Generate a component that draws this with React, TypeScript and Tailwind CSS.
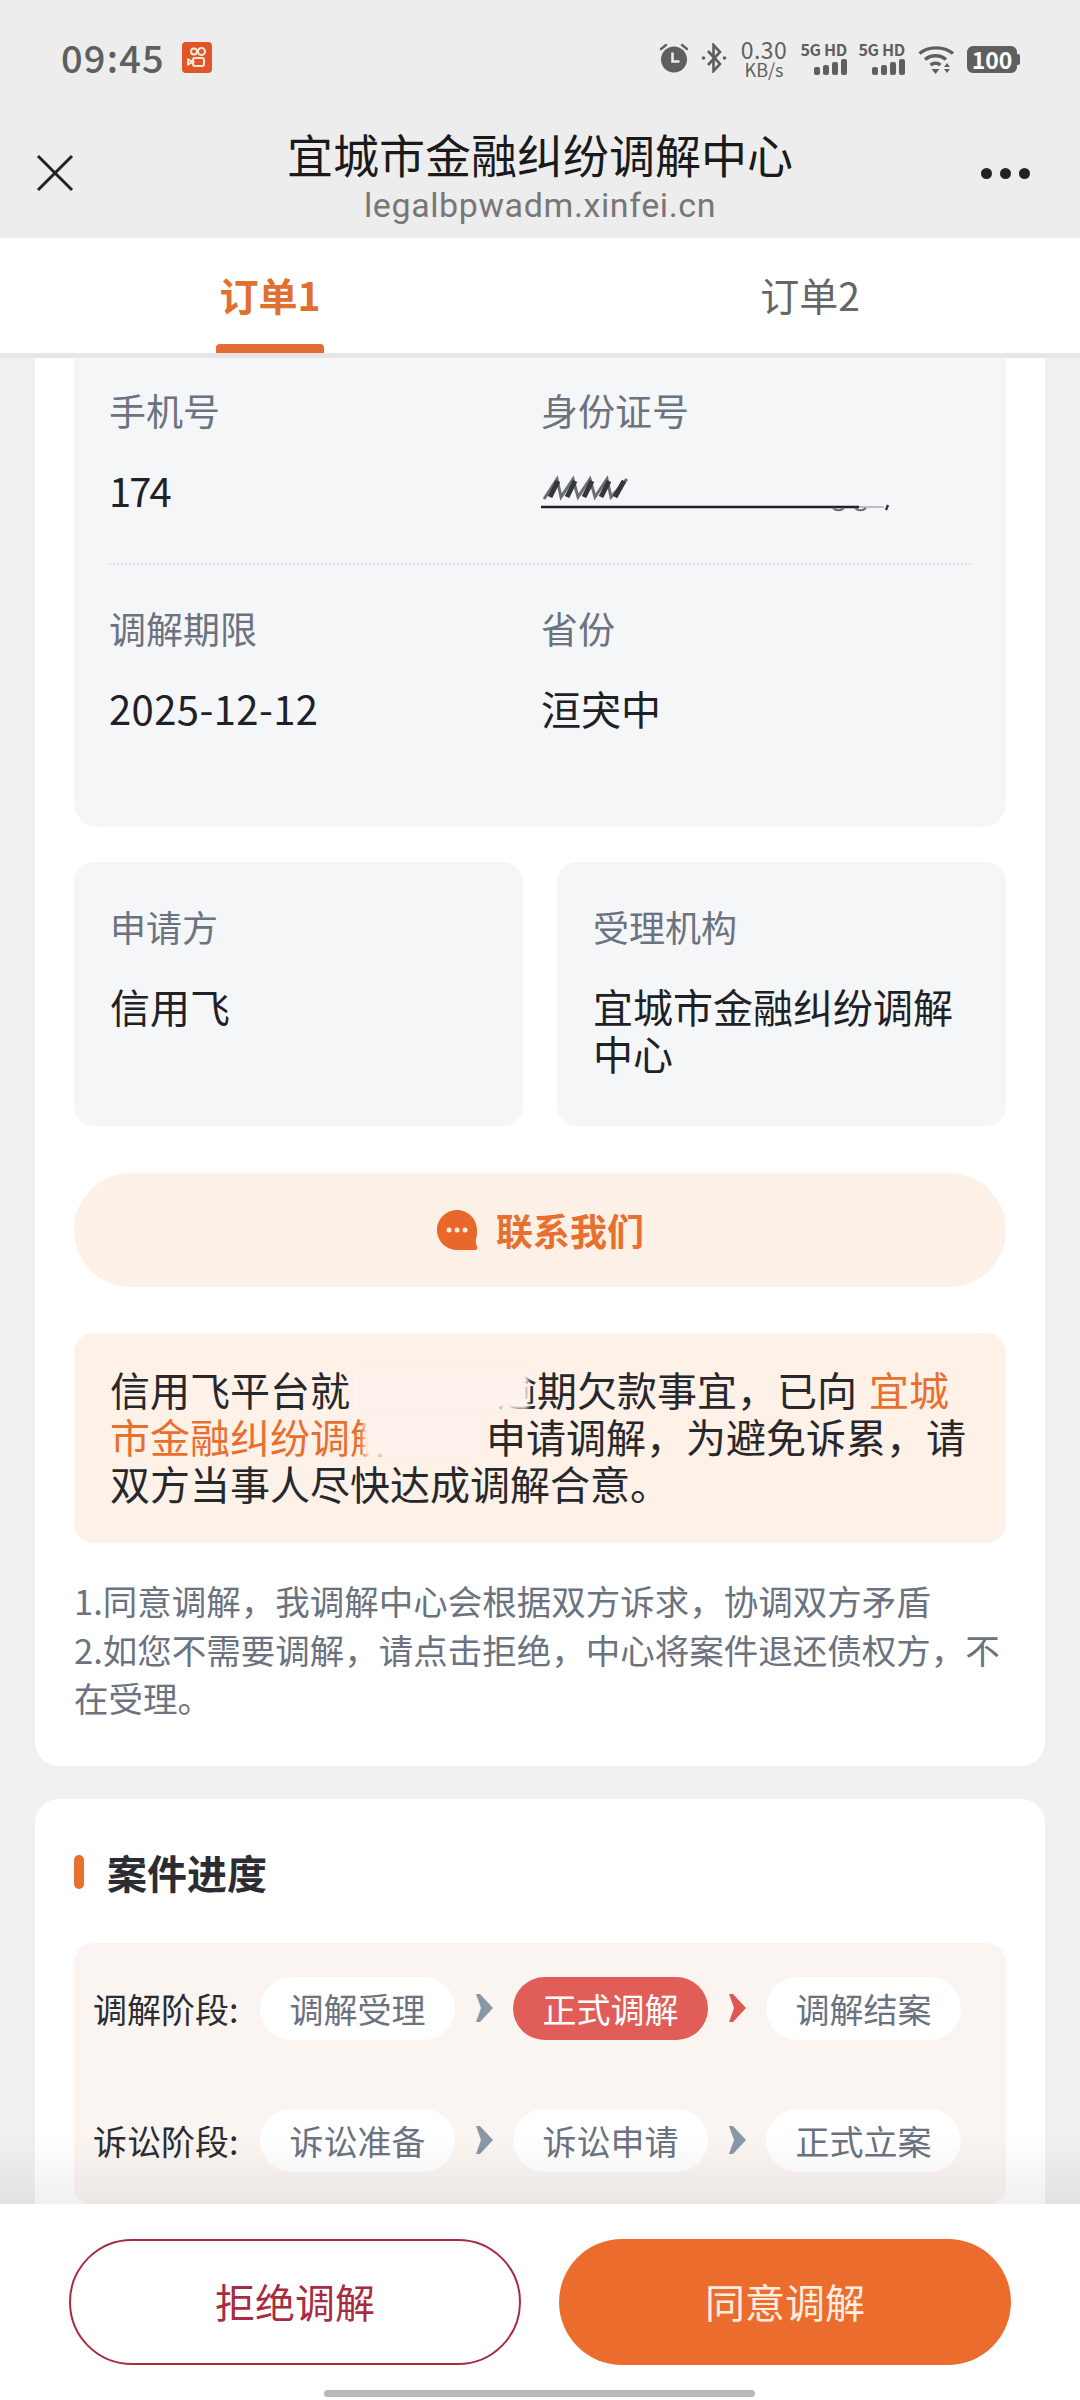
import React from 'react';

const Signal = () => (
  <div className="flex flex-col items-end w-[48px]">
    <span className="text-[16px] leading-[14px] font-bold text-[#5f5f5f] whitespace-nowrap tracking-[-0.3px]">5G HD</span>
    <div className="flex items-end gap-[3px] mt-[3px]">
      <div className="w-[6px] h-[8px] rounded-[2px] bg-[#5f5f5f]" />
      <div className="w-[6px] h-[10px] rounded-[2px] bg-[#5f5f5f]" />
      <div className="w-[6px] h-[13px] rounded-[2px] bg-[#5f5f5f]" />
      <div className="w-[6px] h-[16px] rounded-[2px] bg-[#5f5f5f]" />
    </div>
  </div>
);

const StatusBar = () => (
  <div className="h-[123px] pl-[61px] pr-[60px] flex items-start pt-[38px] justify-between">
    <div className="flex items-center">
      <span className="text-[38px] leading-[38px] font-medium text-[#5f5f5f] tracking-[1.2px]">09:45</span>
      <div className="ml-[17px] w-[30px] h-[31px] rounded-[4px] bg-[#e0562a] flex items-center justify-center">
        <svg width="26" height="26" viewBox="0 0 26 26" fill="none" stroke="#fde9d8" strokeWidth="2">
          <circle cx="10" cy="7.500" r="3" />
          <circle cx="17.500" cy="7.500" r="3.500" />
          <rect x="9" y="14" width="11" height="8" rx="2" />
          <path d="M4 15.500l5 2.500-5 2.500z" />
        </svg>
      </div>
    </div>
    <div className="flex items-start">
      <svg width="30" height="30" viewBox="0 0 30 30" className="mt-[5px]" fill="#5f5f5f">
        <circle cx="15" cy="16.500" r="13" />
        <path d="M2 6l5-4M28 6l-5-4" stroke="#5f5f5f" strokeWidth="2.400" strokeLinecap="round" />
        <path d="M13.500 9.500v9h7" stroke="#ededed" strokeWidth="2.600" fill="none" />
      </svg>
      <svg width="26" height="30" viewBox="0 0 26 30" className="ml-[12px] mt-[5px]" fill="none" stroke="#5f5f5f" strokeWidth="2.600">
        <path d="M7 8l12 13-6.500 7V2l6.500 7L7 22" />
        <circle cx="2.500" cy="15" r="1.800" fill="#5f5f5f" stroke="none" />
        <circle cx="23.500" cy="15" r="1.800" fill="#5f5f5f" stroke="none" />
      </svg>
      <div className="ml-[12px] w-[50px] flex flex-col items-center text-[#5f5f5f] whitespace-nowrap">
        <span className="text-[23px] leading-[22px] tracking-[0.5px]">0.30</span>
        <span className="text-[18px] leading-[18px]">KB/s</span>
      </div>
      <div className="ml-[10px] mt-[4px]">
        <Signal />
      </div>
      <div className="ml-[10px] mt-[4px]">
        <Signal />
      </div>
      <svg width="37" height="30" viewBox="0 0 37 30" className="ml-[13px] mt-[7px]" fill="none" stroke="#5f5f5f" strokeWidth="3.400">
        <path d="M1.500 8.500C10 1 26 1 35 8.500" />
        <path d="M7 14.500c6-5 15-5 21 0" />
        <path d="M12.500 20c3-2.500 7-2.500 10 0" />
        <path d="M13.500 24h8l-4 5z" fill="#5f5f5f" stroke="none" />
        <path d="M29 18l3 4h-6zM26 24h6l-3 4z" fill="#5f5f5f" stroke="none" />
      </svg>
      <div className="ml-[12px] mt-[8px] flex items-center">
        <div className="w-[50px] h-[27px] rounded-[6px] bg-[#5f5f5f] flex items-center justify-center text-white text-[23px] leading-[27px] font-bold">
          100
        </div>
        <div className="w-[3px] h-[11px] rounded-r-[2px] bg-[#5f5f5f]" />
      </div>
    </div>
  </div>
);

const Header = () => (
  <div className="h-[238px] bg-[#ededed] shrink-0">
    <StatusBar />
    <div className="flex items-start pl-[36px] pr-[50px]">
      <div className="w-[74px] pt-[31px]">
        <svg width="38" height="38" viewBox="0 0 38 38" fill="none" stroke="#222222" strokeWidth="3">
          <path d="M2 2l34 34M36 2L2 36" />
        </svg>
      </div>
      <div className="flex-1 flex flex-col items-center">
        <span className="text-[46px] leading-[60px] text-[#1a1a1a] whitespace-nowrap">宜城市金融纠纷调解中心</span>
        <span className="mt-[2px] text-[34px] leading-[40px] text-[#777777] tracking-[0.6px] font-['Roboto',sans-serif]">legalbpwadm.xinfei.cn</span>
      </div>
      <div className="w-[60px] pt-[45px] flex justify-end items-center gap-[8px]">
        <div className="w-[11px] h-[11px] rounded-full bg-[#222222]" />
        <div className="w-[11px] h-[11px] rounded-full bg-[#222222]" />
        <div className="w-[11px] h-[11px] rounded-full bg-[#222222]" />
      </div>
    </div>
  </div>
);

const Tabs = () => (
  <div className="h-[120px] shrink-0 bg-white border-b-[5px] border-[#e6e6e6] flex">
    <div className="w-[540px] flex flex-col items-center pt-[30px]">
      <span className="text-[39px] leading-[52px] font-bold text-[#e0702f]">订单1</span>
      <div className="w-[108px] h-[9px] mt-[24px] rounded-t-[4px] bg-[#e46c32]" />
    </div>
    <div className="w-[540px] flex flex-col items-center pt-[30px]">
      <span className="text-[39px] leading-[52px] text-[#666666]">订单2</span>
    </div>
  </div>
);

const Field = ({ label, children, className }: { label: string; children: React.ReactNode; className?: string }) => (
  <div className={className}>
    <div className="text-[37px] leading-[46px] text-[#6b7280]">{label}</div>
    <div className="text-[40px] leading-[50px] text-[#1f2126] mt-[32px] h-[50px]">{children}</div>
  </div>
);

const IdScribble = () => (
  <svg width="360" height="50" viewBox="0 0 360 50" fill="none" stroke="#33363b">
    <path d="M3 34L16 14l4 18L32 14l5 18L49 14l5 18L66 14l4 18L86 14" strokeWidth="3" stroke="#6a6d72" />
    <path d="M9 32l8-16M26 32l8-16M43 32l8-16M60 32l8-16M74 32l9-16" strokeWidth="5" />
    <path d="M0 42h318" strokeWidth="2.500" stroke="#1f2126" />
    <path d="M318 42h25" strokeWidth="1" stroke="#8a8d92" />
    <path d="M292 43c3 3 8 3 11 0M314 43c3 3 8 3 11 0" strokeWidth="2" stroke="#6a6d72" />
    <path d="M347 40l-2 5" strokeWidth="2.500" />
  </svg>
);

const Chevron = ({ color }: { color: string }) => (
  <svg width="17" height="28" viewBox="0 0 17 28" className="shrink-0" fill={color}>
    <path d="M0 0h4l13 14L4 28H0l5-14z" />
  </svg>
);

const Pill = ({ text, active }: { text: string; active?: boolean }) => (
  <div
    className={
      active
        ? 'w-[195px] h-[63px] rounded-full bg-[#e15d57] text-white text-[34px] leading-[63px] text-center shrink-0'
        : 'w-[195px] h-[63px] rounded-full bg-white text-[#6b7280] text-[34px] leading-[63px] text-center shrink-0'
    }
  >
    {text}
  </div>
);

const StageRow = ({ label, items, active }: { label: string; items: string[]; active?: number }) => (
  <div className="flex items-center">
    <span className="w-[167px] text-[34px] leading-[63px] text-[#2b2d33] whitespace-nowrap">{label}</span>
    <Pill text={items[0]} />
    <div className="w-[58px] flex justify-center">
      <Chevron color="#8898a5" />
    </div>
    <Pill text={items[1]} active={active === 1} />
    <div className="w-[58px] flex justify-center">
      <Chevron color={active === 1 ? '#dd5a50' : '#8898a5'} />
    </div>
    <Pill text={items[2]} />
  </div>
);

const App: React.FC = () => {
  return (
    <div className="w-[1080px] h-[2400px] flex flex-col overflow-hidden bg-[#f0f0f1] font-['Noto_Sans_CJK_SC','Noto_Sans',sans-serif]">
      <Header />
      <Tabs />

      <div className="flex-1 relative overflow-hidden px-[35px]">
        <div className="bg-white rounded-b-[24px] px-[39px] pb-[44px]">
          <div className="bg-[#f5f6f8] rounded-b-[24px] h-[469px] px-[35px] pt-[29px]">
            <div className="flex h-[178px] border-b-2 border-dotted border-[#e2e3e6]">
              <Field label="手机号" className="w-[432px]">
                <span className="tracking-[-2px]">174</span>
              </Field>
              <Field label="身份证号">
                <IdScribble />
              </Field>
            </div>
            <div className="flex pt-[40px]">
              <Field label="调解期限" className="w-[432px]">
                <span className="tracking-[0.4px]">2025-12-12</span>
              </Field>
              <Field label="省份">洹宊中</Field>
            </div>
          </div>

          <div className="flex gap-[34px] mt-[35px]">
            <div className="flex-1 h-[264px] rounded-[20px] bg-[#f5f6f8] px-[36px] pt-[41px]">
              <div className="text-[36px] leading-[46px] text-[#6b7280]">申请方</div>
              <div className="text-[40px] leading-[47px] text-[#1f2126] mt-[34px]">信用飞</div>
            </div>
            <div className="flex-1 h-[264px] rounded-[20px] bg-[#f5f6f8] px-[36px] pt-[41px]">
              <div className="text-[36px] leading-[46px] text-[#6b7280]">受理机构</div>
              <div className="text-[40px] leading-[47px] text-[#1f2126] mt-[34px]">宜城市金融纠纷调解中心</div>
            </div>
          </div>

          <div className="mt-[47px] h-[114px] rounded-full bg-[#fdf0e6] flex items-center justify-center">
            <svg width="42" height="42" viewBox="0 0 42 42">
              <path d="M21 1C10 1 1 10 1 21s9 20 20 20h18c2 0 3-2 2-3.500-1-2-1.500-4-1-7 1-3 1-6 1-9.500C41 10 32 1 21 1z" fill="#e8682c" />
              <circle cx="13" cy="21" r="2.500" fill="#fde9d8" />
              <circle cx="21" cy="21" r="2.500" fill="#fde9d8" />
              <circle cx="29" cy="21" r="2.500" fill="#fde9d8" />
            </svg>
            <span className="ml-[18px] text-[37px] leading-[46px] font-bold text-[#e8702e]">联系我们</span>
          </div>

          <div className="mt-[46px] h-[210px] rounded-[20px] bg-[#fdf1e8] pl-[36px] pt-[33px] text-[40px] leading-[47px] text-[#26282c] whitespace-nowrap">
            <div className="relative">
              信用飞平台就<span className="inline-block w-[147px]" />逾期欠款事宜，已向
              <span className="ml-[3px] text-[#e8702e]"> 宜城</span>
              {/* smudge that hides part of the sentence */}
              <div className="absolute left-[243px] top-[3px] w-[175px] h-[40px] bg-[#fdf3ec] blur-[2px]" />
            </div>
            <div className="relative">
              <span className="text-[#e8702e]">市金融纠纷调解</span>
              <span className="inline-block w-[96px]" />申请调解，为避免诉累，请
              <div className="absolute left-[254px] top-[3px] w-[118px] h-[40px] bg-[#fdf3ec] blur-[2px]" />
            </div>
            <div>双方当事人尽快达成调解合意。</div>
          </div>

          <div className="mt-[33px] text-[34.500px] leading-[48.500px] text-[#6b7280]">
            <div>1.同意调解，我调解中心会根据双方诉求，协调双方矛盾</div>
            <div>2.如您不需要调解，请点击拒绝，中心将案件退还债权方，不在受理。</div>
          </div>
        </div>

        <div className="mt-[33px] bg-white rounded-t-[24px] px-[39px] pt-[48px] h-[500px]">
          <div className="flex items-center">
            <div className="w-[10px] h-[34px] rounded-full bg-[#e8702e]" />
            <span className="ml-[23px] text-[40px] leading-[50px] font-bold text-[#2b2d33]">案件进度</span>
          </div>
          <div className="mt-[46px] bg-[#fbf5f2] rounded-[20px] pl-[19px] pt-[34px] pb-[34px] flex flex-col gap-[69px]">
            <StageRow label="调解阶段:" items={['调解受理', '正式调解', '调解结案']} active={1} />
            <StageRow label="诉讼阶段:" items={['诉讼准备', '诉讼申请', '正式立案']} />
          </div>
        </div>

        {/* fade above the fixed footer */}
        <div className="absolute left-0 right-0 bottom-0 h-[70px] bg-gradient-to-b from-transparent to-[#0000000f]" />
      </div>

      <div className="h-[196px] shrink-0 bg-white relative pt-[35px] pl-[69px] pr-[69px]">
        <div className="flex justify-between">
          <div className="w-[452px] h-[126px] pb-[2px] rounded-full border-2 border-[#a82c40] flex items-center justify-center text-[40px] text-[#a82c40]">
            拒绝调解
          </div>
          <div className="w-[452px] h-[126px] pb-[2px] rounded-full bg-[#ec6c2e] flex items-center justify-center text-[40px] text-[#fdeee0]">
            同意调解
          </div>
        </div>
        <div className="absolute bottom-[3px] left-[324px] w-[431px] h-[7px] rounded-full bg-[#b8b8b8]" />
      </div>
    </div>
  );
};

export default App;
